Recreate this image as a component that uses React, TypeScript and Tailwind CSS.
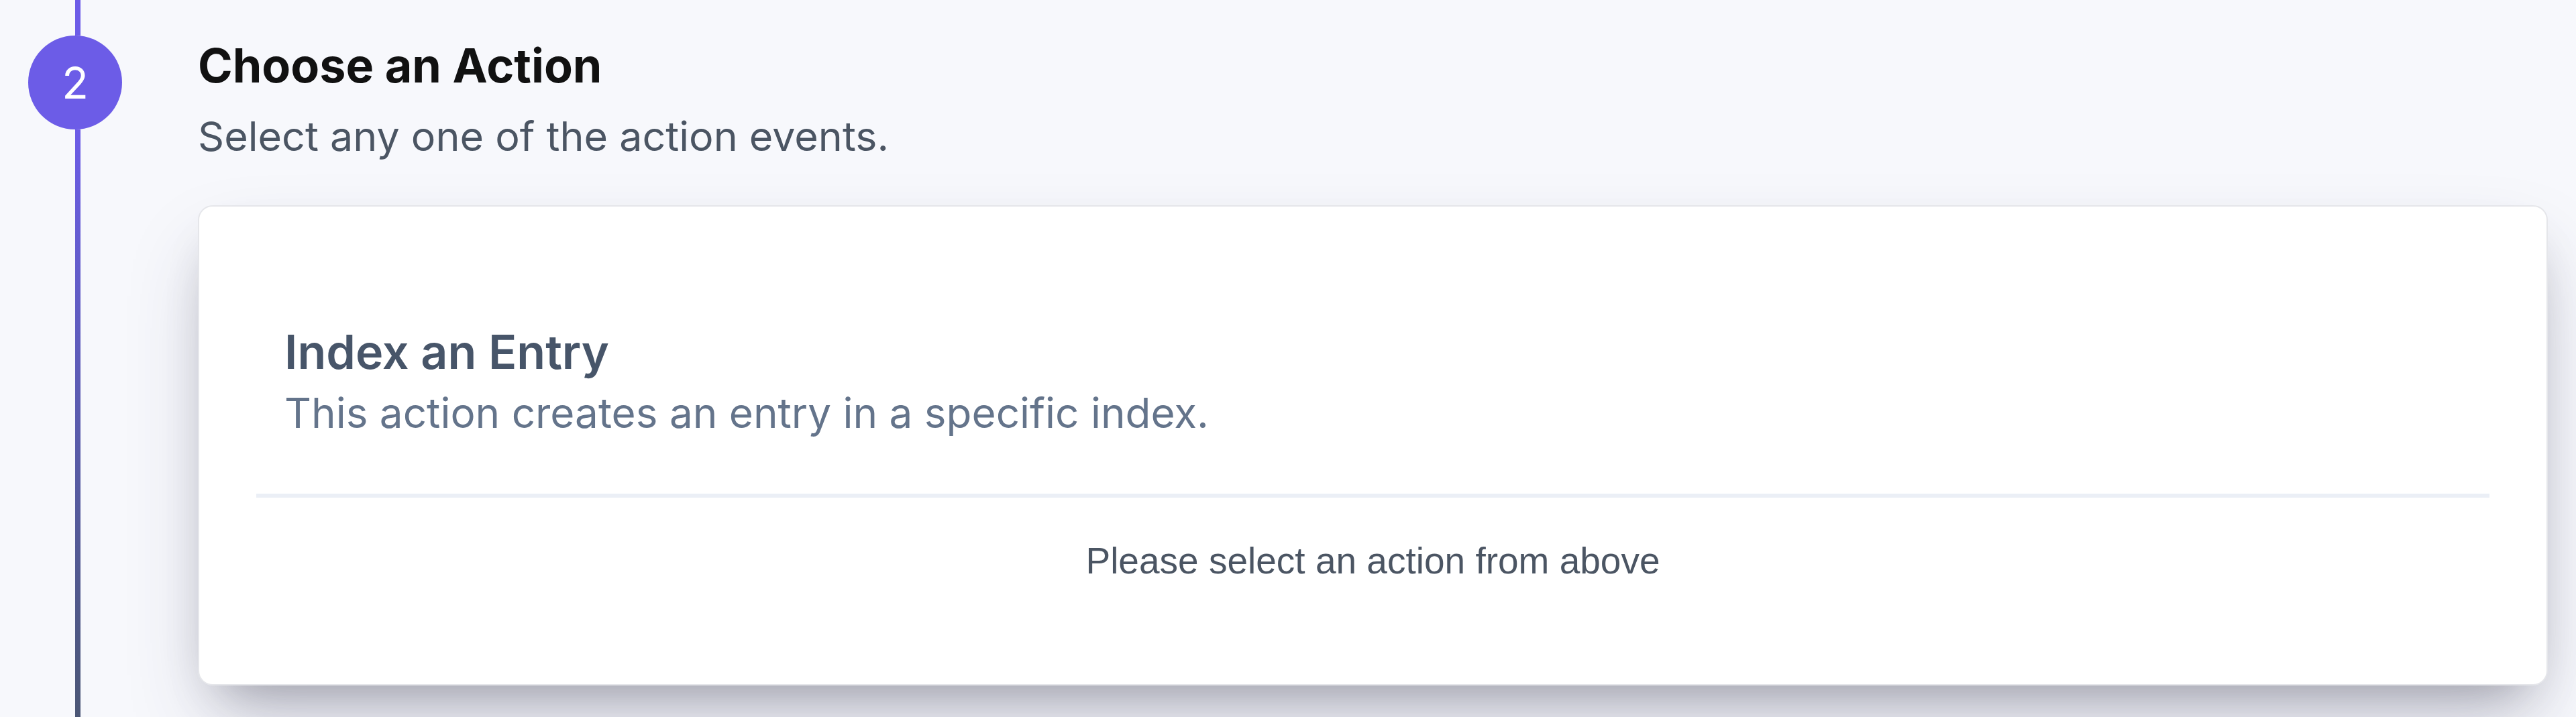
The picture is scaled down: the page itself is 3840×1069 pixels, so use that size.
export default function App() {
  return (
    <div className="w-[3840px] h-[1069px] overflow-hidden bg-[#f7f8fc] flex" style={{ fontFamily: "Inter, 'Noto Sans', sans-serif" }}>
      {/* timeline column */}
      <div className="w-[295px] shrink-0 flex flex-col pl-[42px]">
        <div className="ml-[70px] w-[8px] h-[53px] bg-[#6c5ce7]" />
        <div className="w-[140px] h-[140px] rounded-full bg-[#6c5ce7] flex items-center justify-center text-white text-[65px] leading-none">
          2
        </div>
        <div className="ml-[70px] w-[8px] flex-1 bg-gradient-to-b from-[#6c5ce7] to-[#4b5675]" />
      </div>

      {/* content column */}
      <div className="flex-1 pr-[42px] flex flex-col">
        <h2 className="mt-[63px] text-[70px] leading-none font-bold text-[#111111]">
          Choose an Action
        </h2>
        <p className="mt-[40px] text-[61px] leading-none text-[#4b5563]">
          Select any one of the action events.
        </p>

        <div className="mt-[72px] h-[716px] shrink-0 bg-white border-2 border-[#e5e6ea] rounded-[22px] shadow-[0_60px_120px_-20px_rgba(50,50,93,0.25),0_36px_72px_-36px_rgba(0,0,0,0.3)] px-[85px] pt-[182px] flex flex-col">
          <div className="pl-[42px]">
            <h3 className="text-[70px] leading-none font-semibold text-[#475569]">Index an Entry</h3>
            <p className="mt-[25px] text-[62px] leading-none text-[#64748b]">
              This action creates an entry in a specific index.
            </p>
          </div>
          <div className="mt-[89px] h-[6px] bg-[#ebeff6]" />
          <p
            className="mt-[67px] text-center text-[55px] leading-none text-[#4b5563]"
            style={{ fontFamily: "'Liberation Sans', Arial, sans-serif" }}
          >
            Please select an action from above
          </p>
        </div>
      </div>
    </div>
  );
}
